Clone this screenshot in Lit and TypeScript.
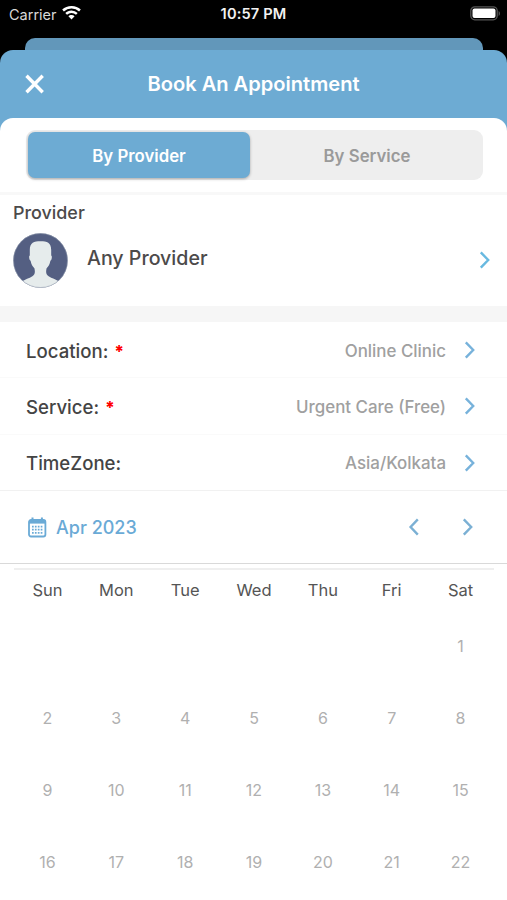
import { LitElement, html, css } from "lit";
import { customElement, property } from "lit/decorators.js";

@customElement("chevron-icon")
class ChevronIcon extends LitElement {
  @property() direction = "right";
  static styles = css`
    :host { display: block; width: 12px; height: 18px; }
    svg { display: block; }
  `;
  render() {
    const d = this.direction === "left" ? "M9.8 1.4 2.6 9 9.8 16.6" : "M1.800 1.400 9.200 9 1.800 16.600";
    return html`<svg width="12" height="18" viewBox="0 0 12 18" fill="none" stroke="currentColor" stroke-width="2.4">
      <path d=${d}></path>
    </svg>`;
  }
}

@customElement("app-root")
class AppRoot extends LitElement {
  rows = [
    { label: "Location:", required: true, value: "Online Clinic" },
    { label: "Service:", required: true, value: "Urgent Care (Free)" },
    { label: "TimeZone:", required: false, value: "Asia/Kolkata" },
  ];
  weekdays = ["Sun", "Mon", "Tue", "Wed", "Thu", "Fri", "Sat"];
  days = [...Array(6).fill(""), ...Array.from({ length: 22 }, (_, i) => String(i + 1))];

  static styles = css`
    * { box-sizing: border-box; }
    :host {
      display: flex; flex-direction: column; width: 507px; height: 900px; overflow: hidden;
      background: #000; color: #444; font-family: Inter, "Liberation Sans", sans-serif;
      white-space: nowrap;
    }
    svg { display: block; }
    .status {
      height: 38px; flex: none; padding: 0 6px 10px 9px; color: #fff;
      display: grid; grid-template-columns: 1fr auto 1fr; align-items: center;
    }
    .carrier { display: flex; align-items: center; gap: 5px; color: #d8d8d8; font-size: 14.5px; }
    .carrier svg { margin-top: -2px; }
    .clock { margin-right: 3px; font-weight: 600; font-size: 14.6px; letter-spacing: 0.15px; color: #f2f2f2; }
    .battery { justify-self: end; margin-top: -2px; }
    .behind { flex: none; height: 12px; margin: 0 24px 0 25px; border-radius: 10px 10px 0 0; background: #6297ba; }
    .sheet {
      flex: 1; display: flex; flex-direction: column; min-height: 0;
      border-radius: 13px 13px 0 0; background: #6dabd3;
    }
    .header {
      height: 68px; flex: none; padding: 0 25px; display: grid;
      grid-template-columns: 20px 1fr 20px; align-items: center; color: #fff;
    }
    .title { text-align: center; font-size: 20.1px; font-weight: 600; }
    .body { flex: 1; min-height: 0; background: #fff; border-radius: 13px 13px 0 0; }
    .tabs {
      height: 50px; margin: 12px 24px 12px 26px; padding: 2px; display: flex;
      border-radius: 9px; background: #eee;
    }
    .tab {
      flex: 1; display: flex; align-items: center; justify-content: center; border-radius: 7px;
      padding: 1px 0 0 3px; font-size: 16.8px; font-weight: 600; color: #9a9a9a;
    }
    .tab.active {
      flex: 0 0 222px; padding-left: 0; background: #6dabd3; color: #fff;
      box-shadow: 0 1px 3px rgba(0, 0, 0, 0.3);
    }
    .provider { height: 114px; border-top: 3px solid #f8f8f8; padding: 7px 16px 0 13px; }
    .caption { font-size: 17.900px; line-height: 22px; font-weight: 500; color: #4c4a4a; }
    .person { display: flex; align-items: center; margin-top: 9px; height: 55px; }
    .name { flex: 1; margin: -5px 0 0 18px; font-size: 19.600px; font-weight: 500; color: #4c4a4a; }
    .person chevron-icon { color: #68b9e0; margin-top: -1px; }
    .band { height: 16px; background: #f6f6f6; }
    .row {
      height: 56.33px; display: flex; align-items: center; padding: 1px 31px 0 26px;
      border-bottom: 1px solid #fafafa; color: #77b2db;
    }
    .row:last-child { border-bottom: 1px solid #f1f1f1; }
    .label { padding-top: 1px; font-size: 18.600px; font-weight: 500; color: #444; }
    .star { color: #f00; margin-left: 6px; font-size: 17px; font-weight: 800; line-height: 1; }
    .value { margin: 1px 18px 0 auto; font-size: 16.900px; font-weight: 500; color: #a0a0a0; }
    .month {
      height: 73px; display: flex; align-items: center; padding: 1px 33px 0 27px;
      border-bottom: 1px solid #d9d9d9; color: #6aaad6;
    }
    .date { margin-left: 9px; padding-top: 1px; font-size: 18px; font-weight: 500; flex: 1; }
    .nav { display: flex; gap: 42px; color: #7bb0d4; }
    .calendar { margin: 4px 13px 0 14px; border-top: 2px solid #efefef; }
    .grid { display: grid; grid-template-columns: repeat(7, 1fr); margin: 0 -1px; text-align: center; }
    .weekday { height: 40px; line-height: 41px; font-size: 16.500px; color: #555; }
    .day { height: 72px; line-height: 72px; font-size: 16px; color: #b0b0b0; }
  `;

  render() {
    return html`
      <div class="status">
        <div class="carrier">
          Carrier
          <svg width="19" height="14" viewBox="0 0 19 14" fill="#fff">
            <path d="M9.500 0C5.900 0 2.600 1.300.2 3.600l1.700 1.800A11 11 0 0 1 9.500 2.500a11 11 0 0 1 7.600 2.900l1.700-1.800A13.500 13.500 0 0 0 9.500 0Z"></path>
            <path d="M9.500 4.500c-2.400 0-4.600.9-6.200 2.500l1.700 1.700a6.600 6.600 0 0 1 9 0L15.700 7A8.900 8.900 0 0 0 9.500 4.500Z"></path>
            <path d="M9.500 9c-1.200 0-2.300.5-3.100 1.200L9.500 13.500l3.100-3.300A4.500 4.500 0 0 0 9.500 9Z"></path>
          </svg>
        </div>
        <div class="clock">10:57 PM</div>
        <svg class="battery" width="31" height="15" viewBox="0 0 31 15">
          <rect x="0.800" y="0.800" width="26.400" height="13" rx="4" fill="none" stroke="#555" stroke-width="1.300"></rect>
          <rect x="2.500" y="2.500" width="23" height="9.600" rx="2" fill="#fff"></rect>
          <path d="M28.600 5v5c1.800-.8 1.800-4.200 0-5Z" fill="#555"></path>
        </svg>
      </div>
      <div class="behind"></div>
      <div class="sheet">
        <div class="header">
          <svg width="20" height="20" viewBox="0 0 20 20" stroke="#fff" stroke-width="3.400">
            <path d="M1.500 1.800 17.700 18.200M17.700 1.800 1.500 18.200"></path>
          </svg>
          <div class="title">Book An Appointment</div>
        </div>
        <div class="body">
          <div class="tabs">
            <div class="tab active">By Provider</div>
            <div class="tab">By Service</div>
          </div>
          <div class="provider">
            <div class="caption">Provider</div>
            <div class="person">
              <svg width="56" height="56" viewBox="0 0 56 56">
                <defs><clipPath id="disc"><circle cx="27.500" cy="27.500" r="27.200"></circle></clipPath></defs>
                <g clip-path="url(#disc)">
                  <rect width="56" height="56" fill="#545f82"></rect>
                  <path d="M27.500 8.200C34 8.200 38.200 9.500 38.200 17v5.500c1.200.5.600 4.500-.8 5.300-.7 3.600-1.900 5.800-3.800 7.500-.9 3.600-.6 6 2 8 3.300 2.200 7 2.800 11.400 5.700V56H8v-7c4.400-2.900 8.100-3.500 11.400-5.700 2.600-2 2.900-4.400 2-8-1.900-1.700-3.100-3.900-3.800-7.500-1.400-.8-2-4.800-.8-5.300V17c0-7.500 4.200-8.800 10.700-8.800Z" fill="#e6ecec"></path>
                </g>
                <circle cx="27.500" cy="27.500" r="27" fill="none" stroke="#9aa4b4" stroke-opacity="0.500"></circle>
              </svg>
              <div class="name">Any Provider</div>
              <chevron-icon></chevron-icon>
            </div>
          </div>
          <div class="band"></div>
          <div>
            ${this.rows.map((r) => html`
              <div class="row">
                <div class="label">${r.label}${r.required ? html`<span class="star">*</span>` : ""}</div>
                <div class="value">${r.value}</div>
                <chevron-icon></chevron-icon>
              </div>`)}
          </div>
          <div class="month">
            <svg width="20" height="21" viewBox="0 0 20 21" fill="none" stroke="currentColor">
              <rect x="2" y="3" width="16.400" height="16.500" rx="2" stroke-width="1.800"></rect>
              <path d="M2 4.800h16.400" stroke-width="3.600"></path>
              <path d="M5.500 0.500v3M14.900 0.500v3" stroke-width="2"></path>
              <path d="M5 9.600h10.500M5 12.700h10.500M5 15.800h10.500" stroke-width="1.700" stroke-dasharray="1.700 1.200"></path>
            </svg>
            <div class="date">Apr 2023</div>
            <div class="nav">
              <chevron-icon direction="left"></chevron-icon>
              <chevron-icon></chevron-icon>
            </div>
          </div>
          <div class="calendar">
            <div class="grid">
              ${this.weekdays.map((d) => html`<div class="weekday">${d}</div>`)}
              ${this.days.map((d) => html`<div class="day">${d}</div>`)}
            </div>
          </div>
        </div>
      </div>
    `;
  }
}
